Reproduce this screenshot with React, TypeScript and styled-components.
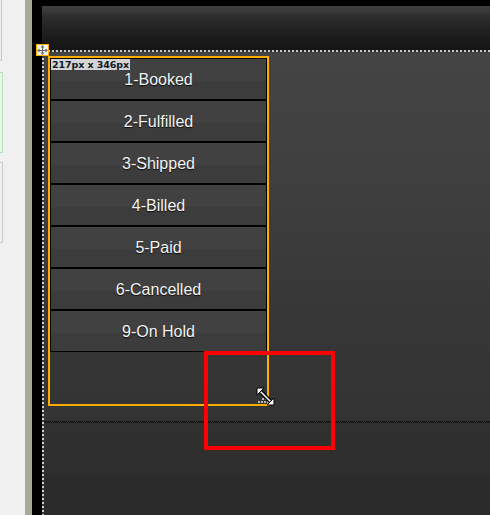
import React from "react";
import styled, { createGlobalStyle } from "styled-components";

const statuses = [
	"1-Booked",
	"2-Fulfilled",
	"3-Shipped",
	"4-Billed",
	"5-Paid",
	"6-Cancelled",
	"9-On Hold",
];

const GlobalStyle = createGlobalStyle`
	html, body {
		margin: 0;
		padding: 0;
		background: #000;
	}
	body {
		font-family: "Liberation Sans", Arial, sans-serif;
	}
`;

function MoveIcon() {
	return (
		<svg width="11" height="10" viewBox="0 0 11 10">
			<g fill="#6a6a6a">
				<rect x="5" y="1" width="1" height="8" />
				<rect x="1" y="5" width="9" height="1" />
				<polygon points="5.5,0 3.5,2.5 7.5,2.5" />
				<polygon points="5.5,10 3.5,7.5 7.5,7.5" />
				<polygon points="0,5.5 2.5,3.5 2.5,7.5" />
				<polygon points="11,5.5 8.5,3.5 8.5,7.5" />
			</g>
		</svg>
	);
}

function ResizeCursor() {
	return (
		<svg width="22" height="22" viewBox="0 0 22 22">
			{/* grip dots */}
			<g fill="#b8b8b8">
				<rect x="10" y="8" width="2" height="2" />
				<rect x="7" y="11" width="2" height="2" />
				<rect x="10" y="11" width="2" height="2" />
				<rect x="3" y="14" width="2" height="2" />
				<rect x="6" y="14" width="2" height="2" />
				<rect x="9" y="14" width="2" height="2" />
			</g>
			<line x1="5" y1="4" x2="16" y2="15" stroke="#000" strokeWidth="4" />
			<line x1="5" y1="4" x2="16" y2="15" stroke="#fff" strokeWidth="1.6" />
			<polygon
				points="2,1 9,1 2,8"
				fill="#fff"
				stroke="#000"
				strokeWidth="1"
				strokeLinejoin="round"
			/>
			<polygon
				points="19,18 12,18 19,11"
				fill="#fff"
				stroke="#000"
				strokeWidth="1"
				strokeLinejoin="round"
			/>
		</svg>
	);
}

function App() {
	return (
		<>
			<GlobalStyle />
			<Page>
				<SidePanel>
					<SideBox $height={60} $color="#c9c9c9" />
					<SideBox $height={79} $gap={11} $color="#b4e6b4" $width={2} />
					<SideBox $height={79} $gap={9} $color="#cacaca" $width={2} />
				</SidePanel>
				<Splitter />
				<Canvas>
					<Header />
					<Body>
						<Zone>
							<Frame>
								<SizeLabel>217px x 346px</SizeLabel>
								{statuses.map((s) => (
									<Row key={s}>{s}</Row>
								))}
							</Frame>
						</Zone>
						<Divider />
						<Footer />
					</Body>
				</Canvas>

				<MoveHandle>
					<MoveIcon />
				</MoveHandle>
				<Cursor>
					<ResizeCursor />
				</Cursor>
				<Highlight />
			</Page>
		</>
	);
}

const Page = styled.div`
	position: relative;
	width: 490px;
	height: 515px;
	display: flex;
	overflow: hidden;
`;

const SidePanel = styled.div`
	width: 25px;
	flex-shrink: 0;
	background: #f0f0f0;
	display: flex;
	flex-direction: column;
	align-items: flex-start;
`;

const SideBox = styled.div<{
	$height: number;
	$gap?: number;
	$color: string;
	$width?: number;
}>`
	width: ${({ $width }) => $width ?? 1}px;
	height: ${({ $height }) => $height}px;
	margin-top: ${({ $gap }) => $gap ?? 0}px;
	border: 1px solid ${({ $color }) => $color};
	border-left: none;
	${({ $gap }) => (!$gap ? "border-top: none;" : "")}
`;

const Splitter = styled.div`
	width: 7px;
	flex-shrink: 0;
	background: #a9a998;
`;

const Canvas = styled.div`
	flex: 1;
	background: #000;
	padding: 6px 0 0 10px;
	display: flex;
	flex-direction: column;
`;

const Header = styled.div`
	height: 44px;
	flex-shrink: 0;
	background: linear-gradient(
		#3f3f3f 0px,
		#3a3a3a 5px,
		#2d2d2d 10px,
		#252525 20px,
		#1b1b1b 32px,
		#151515 44px
	);
`;

const Body = styled.div`
	flex: 1;
	display: flex;
	flex-direction: column;
	padding-left: 2px;
	background: repeating-linear-gradient(
		180deg,
		#cfcfcf 0 2px,
		#3a3a3a 2px 4px
	);
	background-size: 2px 100%;
	background-repeat: no-repeat;
`;

const Zone = styled.div`
	height: 371px;
	flex-shrink: 0;
	box-sizing: border-box;
	padding: 6px 0 0 4px;
	background:
		repeating-linear-gradient(90deg, #c8c8c8 0 2px, #2a2a2a 2px 4px) top
			left / 100% 2px no-repeat,
		linear-gradient(#444444 0%, #3f3f3f 35%, #373737 70%, #333333 100%);
`;

const Frame = styled.div`
	position: relative;
	width: 217px;
	height: 346px;
	border: 2px solid #ffad00;
	display: flex;
	flex-direction: column;
`;

const SizeLabel = styled.div`
	position: absolute;
	top: 1px;
	left: 1px;
	height: 11px;
	padding: 0 1px;
	background: #d4d4d4;
	color: #101828;
	font-family: "DejaVu Sans", Verdana, sans-serif;
	font-weight: bold;
	font-size: 9.5px;
	line-height: 11px;
	letter-spacing: -0.1px;
	white-space: nowrap;
`;

const Row = styled.div`
	box-sizing: border-box;
	height: 42px;
	padding-top: 2px;
	border: 1px solid #000;
	display: flex;
	align-items: center;
	justify-content: center;
	background: linear-gradient(#414141 0 55%, #3c3c3c 55% 100%);
	color: #f4f4f4;
	font-size: 16px;
	text-shadow: 0 1px 1px rgba(0, 0, 0, 0.85);
`;

const Divider = styled.div`
	height: 2px;
	flex-shrink: 0;
	background:
		repeating-linear-gradient(90deg, #000 0 1px, #333 1px 2px) top / 100% 1px
			no-repeat,
		repeating-linear-gradient(90deg, #333 0 1px, #000 1px 2px) bottom / 100%
			1px no-repeat;
`;

const Footer = styled.div`
	flex: 1;
	background: linear-gradient(
		#303030 0px,
		#2e2e2e 50px,
		#2b2b2b 52px,
		#2a2a2a 100%
	);
`;

const MoveHandle = styled.div`
	position: absolute;
	left: 36px;
	top: 44px;
	width: 11px;
	height: 10px;
	border: 1px solid #ffad00;
	background: #f4f4f4;
	display: flex;
	align-items: center;
	justify-content: center;
`;

const Cursor = styled.div`
	position: absolute;
	left: 255px;
	top: 387px;
	width: 22px;
	height: 22px;
`;

const Highlight = styled.div`
	position: absolute;
	left: 204px;
	top: 351px;
	width: 123px;
	height: 91px;
	border: 4px solid #ff0000;
`;

export default App;
